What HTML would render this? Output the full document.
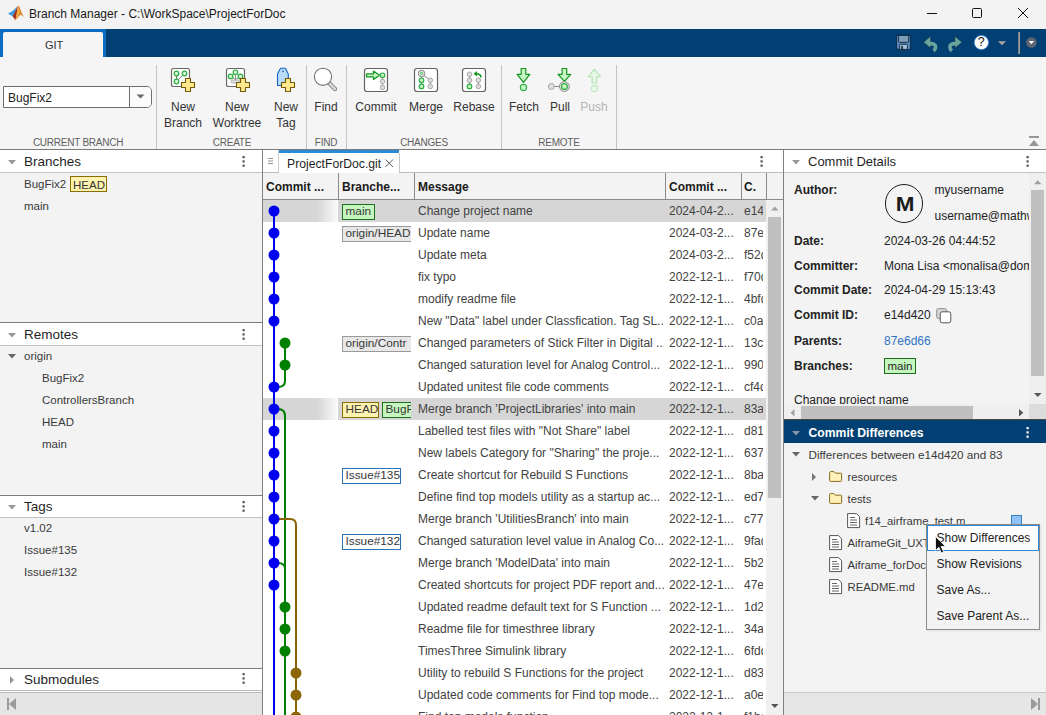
<!DOCTYPE html>
<html><head><meta charset="utf-8">
<style>
*{box-sizing:border-box;margin:0;padding:0}
html,body{width:1046px;height:715px;overflow:hidden;background:#f3f3f3;font-family:"Liberation Sans",sans-serif;font-size:12px;color:#333}
.a{position:absolute}
.t{position:absolute;white-space:nowrap;line-height:14px}
svg{position:absolute;overflow:visible}
</style></head><body>
<!-- TITLE BAR -->
<div class="a" style="left:0;top:0;width:1046px;height:29px;background:#f3f3f3"></div>
<svg style="left:0;top:0" width="30" height="28">
 <path d="M8 13.8L13.5 10.2L17.6 6.3L15.2 12L12.6 16.3Z" fill="#3f9de2"/>
 <path d="M12.6 16.3L17.9 6.1L16.8 13.2L15.4 20.2Z" fill="#a3301c"/>
 <path d="M17.9 6.1L19 5.9L23.6 17L20.6 14.6L15.4 20.2L16.8 13.2Z" fill="#e6842a"/>
 <path d="M18.6 6.6L19.8 12.5L16.2 19.6L17.2 12.6Z" fill="#f5b23c"/>
</svg>
<div class="t" style="left:29px;top:7.3px;font-size:12px;color:#1a1a1a">Branch Manager - C:\WorkSpace\ProjectForDoc</div>
<div class="a" style="left:927px;top:13px;width:10px;height:1px;background:#111"></div>
<div class="a" style="left:972px;top:8px;width:10px;height:10px;border:1px solid #111;border-radius:1.5px"></div>
<svg style="left:1018px;top:8px" width="10" height="10"><path d="M0 0L10 10M10 0L0 10" stroke="#111" stroke-width="1"/></svg>

<!-- TAB BAR -->
<div class="a" style="left:0;top:29px;width:1046px;height:28px;background:#023f72"></div>
<div class="a" style="left:0;top:29px;width:106px;height:28px;background:#0c6cc2"></div>
<div class="a" style="left:3px;top:32px;width:100px;height:25px;background:#f5f5f5;border-radius:2px 2px 0 0"></div>
<div class="t" style="left:45px;top:38px;font-size:11px;color:#333">GIT</div>

<svg style="left:0;top:0" width="1046" height="60">
 <!-- save -->
 <path d="M896.6 35.4H910.4V49.4H898.1L896.6 47.9Z" fill="#5b8dc2" stroke="#0b2438" stroke-width="0.9" stroke-linejoin="round"/>
 <rect x="898.6" y="35.4" width="10" height="7" rx="1" fill="#7e9db8" stroke="#0b2438" stroke-width="0.9"/>
 <rect x="899.6" y="44.4" width="7.8" height="5" rx="0.8" fill="#a5bfd8" stroke="#0b2438" stroke-width="0.9"/>
 <rect x="901.3" y="46" width="1.6" height="3.4" fill="#0b2438"/>
 <!-- undo -->
 <g id="undo">
 <path d="M923.5 42.3L930.6 36.3V48Z" fill="#6aa59d" stroke="#0d2a40" stroke-width="0.5" stroke-linejoin="round"/>
 <path d="M929.5 43.6Q935.6 43.3 935.6 47Q935.6 49.2 933.6 50.9" stroke="#6aa59d" stroke-width="3.6" fill="none"/>
 </g>
 <use href="#undo" transform="translate(1885.5,0) scale(-1,1)"/>
 <!-- help -->
 <circle cx="981.4" cy="42.5" r="7.1" fill="#fff" stroke="#3a8ae0" stroke-width="0.7"/>
 <path d="M998 41.3H1006L1002 45.3Z" fill="#a8a4a0"/>
 <rect x="1018.4" y="32" width="1.5" height="22" fill="#b9ad9f"/>
 <circle cx="1031.4" cy="42.5" r="5.3" fill="#5d6670"/>
 <path d="M1028.6 41H1034.2L1031.4 44.3Z" fill="#fff"/>
</svg>
<div class="t" style="left:977.8px;top:35.3px;font-size:12.5px;font-weight:400;color:#111">?</div>

<!-- TOOLSTRIP -->
<div class="a" style="left:0;top:57px;width:1046px;height:93px;background:#f5f5f5"></div>
<div class="a" style="left:0;top:149px;width:1046px;height:1px;background:#7a7a7a"></div>


<!-- toolstrip separators -->
<div class="a" style="left:156px;top:65px;width:1px;height:84px;background:#c4c4c4"></div>
<div class="a" style="left:306px;top:65px;width:1px;height:84px;background:#c4c4c4"></div>
<div class="a" style="left:346px;top:65px;width:1px;height:84px;background:#c4c4c4"></div>
<div class="a" style="left:501px;top:65px;width:1px;height:84px;background:#c4c4c4"></div>
<div class="a" style="left:616px;top:65px;width:1px;height:84px;background:#c4c4c4"></div>
<!-- combobox -->
<div class="a" style="left:3px;top:86px;width:149px;height:22px;background:#fff;border:1px solid #6e6e6e;border-radius:0 5px 5px 0"></div>
<div class="a" style="left:129px;top:87px;width:1px;height:20px;background:#6e6e6e"></div>
<div class="a" style="left:130px;top:87px;width:21px;height:20px;background:#fbfbfb;border-radius:0 4px 4px 0"></div>
<svg style="left:136px;top:94px" width="10" height="6"><path d="M0.5 0.5H8.5L4.5 4.5Z" fill="#6a6a6a"/></svg>
<div class="t" style="left:8px;top:90.8px;font-size:12px;color:#222">BugFix2</div>
<!-- section labels -->
<div class="t" style="left:31px;top:136px;font-size:10px;letter-spacing:-0.25px;color:#5f5f5f;width:94px;text-align:center">CURRENT BRANCH</div>
<div class="t" style="left:200px;top:136px;font-size:10px;letter-spacing:-0.25px;color:#5f5f5f;width:64px;text-align:center">CREATE</div>
<div class="t" style="left:306px;top:136px;font-size:10px;letter-spacing:-0.25px;color:#5f5f5f;width:40px;text-align:center">FIND</div>
<div class="t" style="left:384px;top:136px;font-size:10px;letter-spacing:-0.25px;color:#5f5f5f;width:80px;text-align:center">CHANGES</div>
<div class="t" style="left:519px;top:136px;font-size:10px;letter-spacing:-0.25px;color:#5f5f5f;width:80px;text-align:center">REMOTE</div>
<!-- button labels -->
<div class="t" style="left:153px;top:99px;width:60px;text-align:center;line-height:16px;font-size:12px;color:#333">New<br>Branch</div>
<div class="t" style="left:207px;top:99px;width:60px;text-align:center;line-height:16px;font-size:12px;color:#333">New<br>Worktree</div>
<div class="t" style="left:256px;top:99px;width:60px;text-align:center;line-height:16px;font-size:12px;color:#333">New<br>Tag</div>
<div class="t" style="left:296px;top:99px;width:60px;text-align:center;line-height:16px;font-size:12px;color:#333">Find</div>
<div class="t" style="left:346px;top:99px;width:60px;text-align:center;line-height:16px;font-size:12px;color:#333">Commit</div>
<div class="t" style="left:396px;top:99px;width:60px;text-align:center;line-height:16px;font-size:12px;color:#333">Merge</div>
<div class="t" style="left:444px;top:99px;width:60px;text-align:center;line-height:16px;font-size:12px;color:#333">Rebase</div>
<div class="t" style="left:494px;top:99px;width:60px;text-align:center;line-height:16px;font-size:12px;color:#333">Fetch</div>
<div class="t" style="left:530px;top:99px;width:60px;text-align:center;line-height:16px;font-size:12px;color:#333">Pull</div>
<div class="t" style="left:564px;top:99px;width:60px;text-align:center;line-height:16px;font-size:12px;color:#b4b4b4">Push</div>
<!-- icons -->
<svg style="left:0;top:0" width="1046" height="150">
 <defs>
  <path id="plus" d="M-2.5 -6.5H2.5V-2.5H6.5V2.5H2.5V6.5H-2.5V2.5H-6.5V-2.5H-2.5Z" fill="#ffe98c" stroke="#735a06" stroke-width="1.1" stroke-linejoin="round"/>
 </defs>
 <!-- new branch -->
 <rect x="171.5" y="68.5" width="18" height="18" rx="2" fill="#fff" stroke="#6a6a6a" stroke-width="1.2"/>
 <path d="M176.5 73.5V81.5L184.5 73.5" stroke="#555" stroke-width="0.8" fill="none"/>
 <g fill="#d6f7d6" stroke="#2fae45" stroke-width="1.2"><circle cx="176.5" cy="73.5" r="2.3"/><circle cx="184.5" cy="73.5" r="2.3"/><circle cx="176.5" cy="81.5" r="2.3"/></g>
 <use href="#plus" x="188" y="85"/>
 <!-- new worktree -->
 <rect x="226.5" y="68.5" width="18" height="18" rx="2" fill="#fff" stroke="#6a6a6a" stroke-width="1.2"/>
 <path d="M235.5 72.5V81M230.6 76.4L235.5 79.5L240.5 76.4" stroke="#777" stroke-width="0.8" fill="none"/>
 <rect x="231" y="80" width="10" height="3" rx="1.5" fill="#ddd" stroke="#999" stroke-width="0.6"/>
 <g fill="#d6f7d6" stroke="#2fae45" stroke-width="1.2"><circle cx="235.5" cy="72.3" r="2.3"/><circle cx="230.6" cy="76.4" r="2.3"/><circle cx="240.5" cy="76.4" r="2.3"/></g>
 <use href="#plus" x="243" y="85"/>
 <!-- new tag -->
 <path d="M277.5 85.5V74L280.5 68.3H285.3L288.3 74V85.5Z" fill="#b9dcfb" stroke="#1a66c4" stroke-width="1.1" stroke-linejoin="round"/>
 <circle cx="283" cy="71.3" r="0.9" fill="#1a66c4"/>
 <use href="#plus" x="288" y="85"/>
 <!-- find -->
 <path d="M328.5 82.5L335 89" stroke="#777" stroke-width="4.2" stroke-linecap="round"/>
 <path d="M328.5 82.5L335 89" stroke="#d9d9d9" stroke-width="2.6" stroke-linecap="round"/>
 <circle cx="323" cy="76.8" r="8.6" fill="#fff" stroke="#6f6f6f" stroke-width="1.1"/>
 <!-- commit -->
 <rect x="364.5" y="68.5" width="23" height="23" rx="2.5" fill="#fff" stroke="#626262" stroke-width="1.2"/>
 <path d="M366.5 73.8H373.5V71L379.5 75.3L373.5 79.6V76.8H366.5Z" fill="#c6f5c6" stroke="#14961e" stroke-width="1.2" stroke-linejoin="round"/>
 <path d="M382.5 75.3V87.4" stroke="#777" stroke-width="0.8"/>
 <circle cx="382.5" cy="75.3" r="2.3" fill="#c6f5c6" stroke="#2fae45" stroke-width="1.2"/>
 <circle cx="382.5" cy="81.4" r="2.3" fill="#ddd" stroke="#a8a8a8" stroke-width="1"/>
 <circle cx="382.5" cy="87.4" r="2.3" fill="#ddd" stroke="#a8a8a8" stroke-width="1"/>
 <!-- merge -->
 <rect x="414.5" y="68.5" width="23" height="23" rx="2.5" fill="#fff" stroke="#626262" stroke-width="1.2"/>
 <path d="M421.5 73.5V86.4M421.5 73.5L430.3 80.3V86.4" stroke="#666" stroke-width="0.8" fill="none"/>
 <circle cx="421.5" cy="73.5" r="3.3" fill="#e8e8e8" stroke="#8a8a8a" stroke-width="1"/>
 <circle cx="421.5" cy="73.5" r="1.2" fill="#c6f5c6" stroke="#2fae45" stroke-width="0.8"/>
 <circle cx="421.5" cy="80.3" r="2.3" fill="#c6f5c6" stroke="#2fae45" stroke-width="1.2"/>
 <circle cx="421.5" cy="86.4" r="2.3" fill="#c6f5c6" stroke="#2fae45" stroke-width="1.2"/>
 <circle cx="430.3" cy="80.3" r="2.3" fill="#ddd" stroke="#a8a8a8" stroke-width="1"/>
 <circle cx="430.3" cy="86.4" r="2.3" fill="#ddd" stroke="#a8a8a8" stroke-width="1"/>
 <!-- rebase -->
 <rect x="462.5" y="68.5" width="23" height="23" rx="2.5" fill="#fff" stroke="#626262" stroke-width="1.2"/>
 <path d="M469.5 74.3V86.4M478.4 80.3V86.4" stroke="#666" stroke-width="0.8" fill="none"/>
 <circle cx="469.5" cy="74.3" r="2.3" fill="#ddd" stroke="#a8a8a8" stroke-width="1"/>
 <circle cx="469.5" cy="80.3" r="2.3" fill="#ddd" stroke="#a8a8a8" stroke-width="1"/>
 <circle cx="469.5" cy="86.4" r="2.3" fill="#c6f5c6" stroke="#2fae45" stroke-width="1.2"/>
 <circle cx="478.4" cy="80.3" r="2.3" fill="#ddd" stroke="#a8a8a8" stroke-width="1"/>
 <circle cx="478.4" cy="86.4" r="2.3" fill="#ddd" stroke="#a8a8a8" stroke-width="1"/>
 <path d="M481 77.5C481 74.5 479 73.8 476 73.8" stroke="#14961e" stroke-width="1.6" fill="none"/>
 <path d="M473.5 73.8L477 71V76.6Z" fill="#14961e"/>
 <!-- fetch -->
 <path d="M521.2 68.5H525.8V74.3H529.8L523.5 82.4L517.2 74.3H521.2Z" fill="#c6f5c6" stroke="#14961e" stroke-width="1.2" stroke-linejoin="round"/>
 <circle cx="523.5" cy="87.5" r="3.1" fill="#c6f5c6" stroke="#2fae45" stroke-width="1.2"/>
 <!-- pull -->
 <path d="M562.1 68.5H566.7V74.3H570.7L564.4 81.4L558.1 74.3H562.1Z" fill="#c6f5c6" stroke="#14961e" stroke-width="1.2" stroke-linejoin="round"/>
 <path d="M551.3 86.5H564" stroke="#888" stroke-width="1"/>
 <circle cx="551.3" cy="86.5" r="3" fill="#ddd" stroke="#a0a0a0" stroke-width="0.9"/>
 <circle cx="564.4" cy="86.5" r="4.9" fill="#e6e6e6" stroke="#8a8a8a" stroke-width="1"/>
 <circle cx="564.4" cy="86.5" r="2.9" fill="#c6f5c6" stroke="#2fae45" stroke-width="1.2"/>
 <!-- push (disabled) -->
 <path d="M592.1 83V76.7H588.3L594.4 69.2L600.5 76.7H596.7V83Z" fill="#e6f8e6" stroke="#b5e2b5" stroke-width="1.1" stroke-linejoin="round"/>
 <circle cx="594.4" cy="88.5" r="3.1" fill="#e6f8e6" stroke="#bfe6bf" stroke-width="1.1"/>
 <!-- collapse toolstrip -->
 <rect x="1029" y="136" width="10" height="2" fill="#979797"/>
 <path d="M1029 146L1034 140L1039 146Z" fill="#979797"/>
</svg>

<!-- LEFT PANEL -->
<div class="a" style="left:0;top:150px;width:262px;height:542px;background:#f3f3f3"></div>
<div class="a" style="left:0;top:150px;width:262px;height:22px;background:#fff"></div>
<div class="a" style="left:0;top:172px;width:262px;height:1px;background:#c2c2c2"></div>
<svg style="left:8px;top:159.7px" width="8" height="5"><path d="M0 0H8L4 4.5Z" fill="#999"/></svg>
<div class="t" style="left:24px;top:154.82px;font-size:13.5px;color:#1f1f1f;font-weight:400;">Branches</div>
<svg style="left:242px;top:155.7px" width="4" height="12"><rect x="0.5" y="0" width="2.2" height="2.2" fill="#555"/><rect x="0.5" y="4.3" width="2.2" height="2.2" fill="#555"/><rect x="0.5" y="8.6" width="2.2" height="2.2" fill="#555"/></svg>
<div class="t" style="left:24px;top:177.42px;font-size:11.5px;color:#3a3a3a;font-weight:400;">BugFix2</div>
<div class="a" style="left:70px;top:176px;width:37px;height:16px;background:#fff3b0;border:1px solid #8a6d00"></div>
<div class="t" style="left:73px;top:177.52px;font-size:11.5px;color:#333;font-weight:400;">HEAD</div>
<div class="t" style="left:24px;top:199.42px;font-size:11.5px;color:#3a3a3a;font-weight:400;">main</div>
<div class="a" style="left:0;top:322px;width:262px;height:1px;background:#7d7d7d"></div>
<div class="a" style="left:0;top:323px;width:262px;height:22px;background:#fff"></div>
<div class="a" style="left:0;top:345px;width:262px;height:1px;background:#c2c2c2"></div>
<svg style="left:8px;top:332.7px" width="8" height="5"><path d="M0 0H8L4 4.5Z" fill="#999"/></svg>
<div class="t" style="left:24px;top:328.02px;font-size:13.5px;color:#1f1f1f;font-weight:400;">Remotes</div>
<svg style="left:242px;top:328.7px" width="4" height="12"><rect x="0.5" y="0" width="2.2" height="2.2" fill="#555"/><rect x="0.5" y="4.3" width="2.2" height="2.2" fill="#555"/><rect x="0.5" y="8.6" width="2.2" height="2.2" fill="#555"/></svg>
<svg style="left:8px;top:354px" width="8" height="5"><path d="M0 0H8L4 4.5Z" fill="#666"/></svg>
<div class="t" style="left:24px;top:349.42px;font-size:11.5px;color:#3a3a3a;font-weight:400;">origin</div>
<div class="t" style="left:42px;top:371.42px;font-size:11.5px;color:#3a3a3a;font-weight:400;">BugFix2</div>
<div class="t" style="left:42px;top:393.42px;font-size:11.5px;color:#3a3a3a;font-weight:400;">ControllersBranch</div>
<div class="t" style="left:42px;top:415.42px;font-size:11.5px;color:#3a3a3a;font-weight:400;">HEAD</div>
<div class="t" style="left:42px;top:437.42px;font-size:11.5px;color:#3a3a3a;font-weight:400;">main</div>
<div class="a" style="left:0;top:495px;width:262px;height:1px;background:#7d7d7d"></div>
<div class="a" style="left:0;top:496px;width:262px;height:21px;background:#fff"></div>
<div class="a" style="left:0;top:517px;width:262px;height:1px;background:#c2c2c2"></div>
<svg style="left:8px;top:505.2px" width="8" height="5"><path d="M0 0H8L4 4.5Z" fill="#999"/></svg>
<div class="t" style="left:24px;top:499.72px;font-size:13.5px;color:#1f1f1f;font-weight:400;">Tags</div>
<svg style="left:242px;top:501.2px" width="4" height="12"><rect x="0.5" y="0" width="2.2" height="2.2" fill="#555"/><rect x="0.5" y="4.3" width="2.2" height="2.2" fill="#555"/><rect x="0.5" y="8.6" width="2.2" height="2.2" fill="#555"/></svg>
<div class="t" style="left:24px;top:521.42px;font-size:11.5px;color:#3a3a3a;font-weight:400;">v1.02</div>
<div class="t" style="left:24px;top:543.42px;font-size:11.5px;color:#3a3a3a;font-weight:400;">Issue#135</div>
<div class="t" style="left:24px;top:565.42px;font-size:11.5px;color:#3a3a3a;font-weight:400;">Issue#132</div>
<div class="a" style="left:0;top:668px;width:262px;height:1px;background:#7d7d7d"></div>
<div class="a" style="left:0;top:669px;width:262px;height:21px;background:#fff"></div>
<div class="a" style="left:0;top:690px;width:262px;height:1px;background:#c2c2c2"></div>
<svg style="left:10px;top:675.7px" width="5" height="9"><path d="M0 0V8L4 4Z" fill="#999"/></svg>
<div class="t" style="left:24px;top:673.02px;font-size:13.5px;color:#1f1f1f;font-weight:400;">Submodules</div>
<svg style="left:242px;top:673.4px" width="4" height="12"><rect x="0.5" y="0" width="2.2" height="2.2" fill="#555"/><rect x="0.5" y="4.3" width="2.2" height="2.2" fill="#555"/><rect x="0.5" y="8.6" width="2.2" height="2.2" fill="#555"/></svg>
<div class="a" style="left:0;top:690px;width:262px;height:1px;background:#bdbdbd"></div>
<div class="a" style="left:0;top:691px;width:262px;height:1px;background:#fff"></div>
<div class="a" style="left:0;top:692px;width:262px;height:1px;background:#bdbdbd"></div>
<div class="a" style="left:0;top:693px;width:262px;height:22px;background:#e5e5e5"></div>
<svg style="left:7px;top:698px" width="10" height="12"><rect x="0" y="0" width="2" height="12" fill="#9a9a9a"/><path d="M2 6L9 0V12Z" fill="#9a9a9a"/></svg>
<div class="a" style="left:262px;top:150px;width:1px;height:565px;background:#808080"></div>

<!-- MIDDLE PANEL -->
<div class="a" style="left:263px;top:150px;width:520px;height:23px;background:#fff"></div>
<div class="a" style="left:263px;top:172px;width:16px;height:1px;background:#bdbdbd"></div>
<div class="a" style="left:399px;top:172px;width:384px;height:1px;background:#bdbdbd"></div>
<div class="a" style="left:278px;top:150px;width:1px;height:22px;background:#d0d0d0"></div>
<div class="a" style="left:399px;top:153px;width:1px;height:19px;background:#c8c8c8"></div>
<div class="a" style="left:279px;top:150px;width:120px;height:3px;background:#2b8ad6"></div>
<svg style="left:268px;top:158px" width="6" height="7"><path d="M0 0.5H5M0 3H5M0 5.5H5" stroke="#888" stroke-width="0.9"/></svg>
<div class="t" style="left:287px;top:156.77px;font-size:12.2px;color:#1f1f1f;font-weight:400;">ProjectForDoc.git</div>
<svg style="left:385px;top:159px" width="9" height="9"><path d="M0.5 0.5L8 8M8 0.5L0.5 8" stroke="#444" stroke-width="0.9"/></svg>
<svg style="left:760px;top:156px" width="4" height="12"><rect x="0.5" y="0" width="2.2" height="2.2" fill="#555"/><rect x="0.5" y="4.3" width="2.2" height="2.2" fill="#555"/><rect x="0.5" y="8.6" width="2.2" height="2.2" fill="#555"/></svg>
<div class="a" style="left:263px;top:173px;width:520px;height:26px;background:#f3f3f3"></div>
<div class="a" style="left:263px;top:199px;width:520px;height:1px;background:#8a8a8a"></div>
<div class="a" style="left:338px;top:173px;width:1px;height:26px;background:#8a8a8a"></div>
<div class="a" style="left:414px;top:173px;width:1px;height:26px;background:#8a8a8a"></div>
<div class="a" style="left:665px;top:173px;width:1px;height:26px;background:#8a8a8a"></div>
<div class="a" style="left:741px;top:173px;width:1px;height:26px;background:#8a8a8a"></div>
<div class="a" style="left:766px;top:173px;width:1px;height:26px;background:#8a8a8a"></div>
<div class="t" style="left:266px;top:179.84px;font-size:12px;color:#1a1a1a;font-weight:700;">Commit ...</div>
<div class="t" style="left:342px;top:179.84px;font-size:12px;color:#1a1a1a;font-weight:700;">Branche...</div>
<div class="t" style="left:418px;top:179.84px;font-size:12px;color:#1a1a1a;font-weight:700;">Message</div>
<div class="t" style="left:669px;top:179.84px;font-size:12px;color:#1a1a1a;font-weight:700;">Commit ...</div>
<div class="t" style="left:744px;top:179.84px;font-size:12px;color:#1a1a1a;font-weight:700;">C.</div>
<div class="a" style="left:263px;top:200px;width:503px;height:515px;background:#fff"></div>
<div class="a" style="left:263px;top:200px;width:503px;height:515px;overflow:hidden">
<div class="a" style="left:0;top:0px;width:503px;height:22px;background:#d6d6d6"></div>
<div class="a" style="left:54px;top:0px;width:21px;height:22px;background:linear-gradient(90deg,#d6d6d6,#fbfbfb)"></div>
<div class="a" style="left:74px;top:0px;width:1px;height:22px;background:#fff"></div>
<div class="a" style="left:155px;top:0px;width:246px;height:22px;overflow:hidden"><div class="t" style="left:0px;top:4.44px;font-size:12px;color:#424242;font-weight:400;">Change project name</div>
</div>
<div class="t" style="left:406px;top:4.44px;font-size:12px;color:#424242;font-weight:400;">2024-04-2...</div>
<div class="a" style="left:478px;top:0px;width:22px;height:22px;overflow:hidden"><div class="t" style="left:3px;top:4.44px;font-size:12px;color:#424242;font-weight:400;">e14d6e</div>
</div>
<div class="a" style="left:75px;top:0px;width:73px;height:22px;overflow:hidden">
<div class="a" style="left:4px;top:3.5px;width:33px;height:16px;background:#c6f6c0;border:1px solid #1f6e1f"></div>
<div class="t" style="left:7.5px;top:4.41px;font-size:11.8px;color:#383838;font-weight:400;">main</div>
</div>
<div class="a" style="left:155px;top:22px;width:246px;height:22px;overflow:hidden"><div class="t" style="left:0px;top:4.44px;font-size:12px;color:#424242;font-weight:400;">Update name</div>
</div>
<div class="t" style="left:406px;top:26.44px;font-size:12px;color:#424242;font-weight:400;">2024-03-2...</div>
<div class="a" style="left:478px;top:22px;width:22px;height:22px;overflow:hidden"><div class="t" style="left:3px;top:4.44px;font-size:12px;color:#424242;font-weight:400;">87ed6e</div>
</div>
<div class="a" style="left:75px;top:22px;width:73px;height:22px;overflow:hidden">
<div class="a" style="left:4px;top:3.5px;width:80px;height:16px;background:#e8e8e8;border:1px solid #9a9a9a"></div>
<div class="t" style="left:7.5px;top:4.41px;font-size:11.8px;color:#383838;font-weight:400;">origin/HEAD</div>
</div>
<div class="a" style="left:155px;top:44px;width:246px;height:22px;overflow:hidden"><div class="t" style="left:0px;top:4.44px;font-size:12px;color:#424242;font-weight:400;">Update meta</div>
</div>
<div class="t" style="left:406px;top:48.44px;font-size:12px;color:#424242;font-weight:400;">2024-03-2...</div>
<div class="a" style="left:478px;top:44px;width:22px;height:22px;overflow:hidden"><div class="t" style="left:3px;top:4.44px;font-size:12px;color:#424242;font-weight:400;">f52d6e</div>
</div>
<div class="a" style="left:155px;top:66px;width:246px;height:22px;overflow:hidden"><div class="t" style="left:0px;top:4.44px;font-size:12px;color:#424242;font-weight:400;">fix typo</div>
</div>
<div class="t" style="left:406px;top:70.44px;font-size:12px;color:#424242;font-weight:400;">2022-12-1...</div>
<div class="a" style="left:478px;top:66px;width:22px;height:22px;overflow:hidden"><div class="t" style="left:3px;top:4.44px;font-size:12px;color:#424242;font-weight:400;">f70d6e</div>
</div>
<div class="a" style="left:155px;top:88px;width:246px;height:22px;overflow:hidden"><div class="t" style="left:0px;top:4.44px;font-size:12px;color:#424242;font-weight:400;">modify readme file</div>
</div>
<div class="t" style="left:406px;top:92.44px;font-size:12px;color:#424242;font-weight:400;">2022-12-1...</div>
<div class="a" style="left:478px;top:88px;width:22px;height:22px;overflow:hidden"><div class="t" style="left:3px;top:4.44px;font-size:12px;color:#424242;font-weight:400;">4bfd6e</div>
</div>
<div class="a" style="left:155px;top:110px;width:246px;height:22px;overflow:hidden"><div class="t" style="left:0px;top:4.44px;font-size:12px;color:#424242;font-weight:400;">New "Data" label under Classfication. Tag SL...</div>
</div>
<div class="t" style="left:406px;top:114.44px;font-size:12px;color:#424242;font-weight:400;">2022-12-1...</div>
<div class="a" style="left:478px;top:110px;width:22px;height:22px;overflow:hidden"><div class="t" style="left:3px;top:4.44px;font-size:12px;color:#424242;font-weight:400;">c0ad6e</div>
</div>
<div class="a" style="left:155px;top:132px;width:246px;height:22px;overflow:hidden"><div class="t" style="left:0px;top:4.44px;font-size:12px;color:#424242;font-weight:400;">Changed parameters of Stick Filter in Digital ...</div>
</div>
<div class="t" style="left:406px;top:136.44px;font-size:12px;color:#424242;font-weight:400;">2022-12-1...</div>
<div class="a" style="left:478px;top:132px;width:22px;height:22px;overflow:hidden"><div class="t" style="left:3px;top:4.44px;font-size:12px;color:#424242;font-weight:400;">13cd6e</div>
</div>
<div class="a" style="left:75px;top:132px;width:73px;height:22px;overflow:hidden">
<div class="a" style="left:4px;top:3.5px;width:80px;height:16px;background:#e8e8e8;border:1px solid #9a9a9a"></div>
<div class="t" style="left:7.5px;top:4.41px;font-size:11.8px;color:#383838;font-weight:400;">origin/Contr</div>
</div>
<div class="a" style="left:155px;top:154px;width:246px;height:22px;overflow:hidden"><div class="t" style="left:0px;top:4.44px;font-size:12px;color:#424242;font-weight:400;">Changed saturation level for Analog Control...</div>
</div>
<div class="t" style="left:406px;top:158.44px;font-size:12px;color:#424242;font-weight:400;">2022-12-1...</div>
<div class="a" style="left:478px;top:154px;width:22px;height:22px;overflow:hidden"><div class="t" style="left:3px;top:4.44px;font-size:12px;color:#424242;font-weight:400;">990d6e</div>
</div>
<div class="a" style="left:155px;top:176px;width:246px;height:22px;overflow:hidden"><div class="t" style="left:0px;top:4.44px;font-size:12px;color:#424242;font-weight:400;">Updated unitest file code comments</div>
</div>
<div class="t" style="left:406px;top:180.44px;font-size:12px;color:#424242;font-weight:400;">2022-12-1...</div>
<div class="a" style="left:478px;top:176px;width:22px;height:22px;overflow:hidden"><div class="t" style="left:3px;top:4.44px;font-size:12px;color:#424242;font-weight:400;">cf4d6e</div>
</div>
<div class="a" style="left:0;top:198px;width:503px;height:22px;background:#d6d6d6"></div>
<div class="a" style="left:54px;top:198px;width:21px;height:22px;background:linear-gradient(90deg,#d6d6d6,#fbfbfb)"></div>
<div class="a" style="left:74px;top:198px;width:1px;height:22px;background:#fff"></div>
<div class="a" style="left:155px;top:198px;width:246px;height:22px;overflow:hidden"><div class="t" style="left:0px;top:4.44px;font-size:12px;color:#424242;font-weight:400;">Merge branch 'ProjectLibraries' into main</div>
</div>
<div class="t" style="left:406px;top:202.44px;font-size:12px;color:#424242;font-weight:400;">2022-12-1...</div>
<div class="a" style="left:478px;top:198px;width:22px;height:22px;overflow:hidden"><div class="t" style="left:3px;top:4.44px;font-size:12px;color:#424242;font-weight:400;">83ad6e</div>
</div>
<div class="a" style="left:75px;top:198px;width:73px;height:22px;overflow:hidden">
<div class="a" style="left:4px;top:3.5px;width:37px;height:16px;background:#fff3b0;border:1px solid #8a6d00"></div>
<div class="t" style="left:7.5px;top:4.41px;font-size:11.8px;color:#383838;font-weight:400;">HEAD</div>
<div class="a" style="left:44px;top:3.5px;width:40px;height:16px;background:#c6f6c0;border:1px solid #1f6e1f"></div>
<div class="t" style="left:47.5px;top:4.41px;font-size:11.8px;color:#383838;font-weight:400;">BugF</div>
</div>
<div class="a" style="left:155px;top:220px;width:246px;height:22px;overflow:hidden"><div class="t" style="left:0px;top:4.44px;font-size:12px;color:#424242;font-weight:400;">Labelled test files with "Not Share" label</div>
</div>
<div class="t" style="left:406px;top:224.44px;font-size:12px;color:#424242;font-weight:400;">2022-12-1...</div>
<div class="a" style="left:478px;top:220px;width:22px;height:22px;overflow:hidden"><div class="t" style="left:3px;top:4.44px;font-size:12px;color:#424242;font-weight:400;">d81d6e</div>
</div>
<div class="a" style="left:155px;top:242px;width:246px;height:22px;overflow:hidden"><div class="t" style="left:0px;top:4.44px;font-size:12px;color:#424242;font-weight:400;">New labels Category for "Sharing" the proje...</div>
</div>
<div class="t" style="left:406px;top:246.44px;font-size:12px;color:#424242;font-weight:400;">2022-12-1...</div>
<div class="a" style="left:478px;top:242px;width:22px;height:22px;overflow:hidden"><div class="t" style="left:3px;top:4.44px;font-size:12px;color:#424242;font-weight:400;">637d6e</div>
</div>
<div class="a" style="left:155px;top:264px;width:246px;height:22px;overflow:hidden"><div class="t" style="left:0px;top:4.44px;font-size:12px;color:#424242;font-weight:400;">Create shortcut for Rebuild S Functions</div>
</div>
<div class="t" style="left:406px;top:268.44px;font-size:12px;color:#424242;font-weight:400;">2022-12-1...</div>
<div class="a" style="left:478px;top:264px;width:22px;height:22px;overflow:hidden"><div class="t" style="left:3px;top:4.44px;font-size:12px;color:#424242;font-weight:400;">8bad6e</div>
</div>
<div class="a" style="left:75px;top:264px;width:73px;height:22px;overflow:hidden">
<div class="a" style="left:4px;top:3.5px;width:59px;height:16px;background:#ffffff;border:1px solid #2d74b5"></div>
<div class="t" style="left:7.5px;top:4.41px;font-size:11.8px;color:#383838;font-weight:400;">Issue#135</div>
</div>
<div class="a" style="left:155px;top:286px;width:246px;height:22px;overflow:hidden"><div class="t" style="left:0px;top:4.44px;font-size:12px;color:#424242;font-weight:400;">Define find top models utility as a startup ac...</div>
</div>
<div class="t" style="left:406px;top:290.44px;font-size:12px;color:#424242;font-weight:400;">2022-12-1...</div>
<div class="a" style="left:478px;top:286px;width:22px;height:22px;overflow:hidden"><div class="t" style="left:3px;top:4.44px;font-size:12px;color:#424242;font-weight:400;">ed7d6e</div>
</div>
<div class="a" style="left:155px;top:308px;width:246px;height:22px;overflow:hidden"><div class="t" style="left:0px;top:4.44px;font-size:12px;color:#424242;font-weight:400;">Merge branch 'UtilitiesBranch' into main</div>
</div>
<div class="t" style="left:406px;top:312.44px;font-size:12px;color:#424242;font-weight:400;">2022-12-1...</div>
<div class="a" style="left:478px;top:308px;width:22px;height:22px;overflow:hidden"><div class="t" style="left:3px;top:4.44px;font-size:12px;color:#424242;font-weight:400;">c77d6e</div>
</div>
<div class="a" style="left:155px;top:330px;width:246px;height:22px;overflow:hidden"><div class="t" style="left:0px;top:4.44px;font-size:12px;color:#424242;font-weight:400;">Changed saturation level value in Analog Co...</div>
</div>
<div class="t" style="left:406px;top:334.44px;font-size:12px;color:#424242;font-weight:400;">2022-12-1...</div>
<div class="a" style="left:478px;top:330px;width:22px;height:22px;overflow:hidden"><div class="t" style="left:3px;top:4.44px;font-size:12px;color:#424242;font-weight:400;">9fad6e</div>
</div>
<div class="a" style="left:75px;top:330px;width:73px;height:22px;overflow:hidden">
<div class="a" style="left:4px;top:3.5px;width:59px;height:16px;background:#ffffff;border:1px solid #2d74b5"></div>
<div class="t" style="left:7.5px;top:4.41px;font-size:11.8px;color:#383838;font-weight:400;">Issue#132</div>
</div>
<div class="a" style="left:155px;top:352px;width:246px;height:22px;overflow:hidden"><div class="t" style="left:0px;top:4.44px;font-size:12px;color:#424242;font-weight:400;">Merge branch 'ModelData' into main</div>
</div>
<div class="t" style="left:406px;top:356.44px;font-size:12px;color:#424242;font-weight:400;">2022-12-1...</div>
<div class="a" style="left:478px;top:352px;width:22px;height:22px;overflow:hidden"><div class="t" style="left:3px;top:4.44px;font-size:12px;color:#424242;font-weight:400;">5b2d6e</div>
</div>
<div class="a" style="left:155px;top:374px;width:246px;height:22px;overflow:hidden"><div class="t" style="left:0px;top:4.44px;font-size:12px;color:#424242;font-weight:400;">Created shortcuts for project PDF report and...</div>
</div>
<div class="t" style="left:406px;top:378.44px;font-size:12px;color:#424242;font-weight:400;">2022-12-1...</div>
<div class="a" style="left:478px;top:374px;width:22px;height:22px;overflow:hidden"><div class="t" style="left:3px;top:4.44px;font-size:12px;color:#424242;font-weight:400;">47ed6e</div>
</div>
<div class="a" style="left:155px;top:396px;width:246px;height:22px;overflow:hidden"><div class="t" style="left:0px;top:4.44px;font-size:12px;color:#424242;font-weight:400;">Updated readme default text for S Function ...</div>
</div>
<div class="t" style="left:406px;top:400.44px;font-size:12px;color:#424242;font-weight:400;">2022-12-1...</div>
<div class="a" style="left:478px;top:396px;width:22px;height:22px;overflow:hidden"><div class="t" style="left:3px;top:4.44px;font-size:12px;color:#424242;font-weight:400;">1d2d6e</div>
</div>
<div class="a" style="left:155px;top:418px;width:246px;height:22px;overflow:hidden"><div class="t" style="left:0px;top:4.44px;font-size:12px;color:#424242;font-weight:400;">Readme file for timesthree library</div>
</div>
<div class="t" style="left:406px;top:422.44px;font-size:12px;color:#424242;font-weight:400;">2022-12-1...</div>
<div class="a" style="left:478px;top:418px;width:22px;height:22px;overflow:hidden"><div class="t" style="left:3px;top:4.44px;font-size:12px;color:#424242;font-weight:400;">34ad6e</div>
</div>
<div class="a" style="left:155px;top:440px;width:246px;height:22px;overflow:hidden"><div class="t" style="left:0px;top:4.44px;font-size:12px;color:#424242;font-weight:400;">TimesThree Simulink library</div>
</div>
<div class="t" style="left:406px;top:444.44px;font-size:12px;color:#424242;font-weight:400;">2022-12-1...</div>
<div class="a" style="left:478px;top:440px;width:22px;height:22px;overflow:hidden"><div class="t" style="left:3px;top:4.44px;font-size:12px;color:#424242;font-weight:400;">6fdd6e</div>
</div>
<div class="a" style="left:155px;top:462px;width:246px;height:22px;overflow:hidden"><div class="t" style="left:0px;top:4.44px;font-size:12px;color:#424242;font-weight:400;">Utility to rebuild S Functions for the project</div>
</div>
<div class="t" style="left:406px;top:466.44px;font-size:12px;color:#424242;font-weight:400;">2022-12-1...</div>
<div class="a" style="left:478px;top:462px;width:22px;height:22px;overflow:hidden"><div class="t" style="left:3px;top:4.44px;font-size:12px;color:#424242;font-weight:400;">d83d6e</div>
</div>
<div class="a" style="left:155px;top:484px;width:246px;height:22px;overflow:hidden"><div class="t" style="left:0px;top:4.44px;font-size:12px;color:#424242;font-weight:400;">Updated code comments for Find top mode...</div>
</div>
<div class="t" style="left:406px;top:488.44px;font-size:12px;color:#424242;font-weight:400;">2022-12-1...</div>
<div class="a" style="left:478px;top:484px;width:22px;height:22px;overflow:hidden"><div class="t" style="left:3px;top:4.44px;font-size:12px;color:#424242;font-weight:400;">a0ed6e</div>
</div>
<div class="a" style="left:155px;top:506px;width:246px;height:22px;overflow:hidden"><div class="t" style="left:0px;top:4.44px;font-size:12px;color:#424242;font-weight:400;">Find top models function</div>
</div>
<div class="t" style="left:406px;top:510.44px;font-size:12px;color:#424242;font-weight:400;">2022-12-1...</div>
<div class="a" style="left:478px;top:506px;width:22px;height:22px;overflow:hidden"><div class="t" style="left:3px;top:4.44px;font-size:12px;color:#424242;font-weight:400;">f1bd6e</div>
</div>
</div>
<svg style="left:263px;top:200px" width="503" height="515"><g transform="translate(-263,-200)"><path d="M274 211V715" stroke="#0000f0" stroke-width="2" fill="none"/><path d="M285 343V381 Q285 387 278 387" stroke="#007f00" stroke-width="2" fill="none"/><path d="M278 409 Q285 409 285 416 V715" stroke="#007f00" stroke-width="2" fill="none"/><path d="M278 519 H290 Q296 519 296 525 V715" stroke="#8c6508" stroke-width="2" fill="none"/><path d="M278 563 Q285 563 285 569" stroke="#007f00" stroke-width="2" fill="none"/><circle cx="274" cy="211" r="5.5" fill="#0000f0"/><circle cx="274" cy="233" r="5.5" fill="#0000f0"/><circle cx="274" cy="255" r="5.5" fill="#0000f0"/><circle cx="274" cy="277" r="5.5" fill="#0000f0"/><circle cx="274" cy="299" r="5.5" fill="#0000f0"/><circle cx="274" cy="321" r="5.5" fill="#0000f0"/><circle cx="274" cy="387" r="5.5" fill="#0000f0"/><circle cx="274" cy="409" r="5.5" fill="#0000f0"/><circle cx="274" cy="431" r="5.5" fill="#0000f0"/><circle cx="274" cy="453" r="5.5" fill="#0000f0"/><circle cx="274" cy="475" r="5.5" fill="#0000f0"/><circle cx="274" cy="497" r="5.5" fill="#0000f0"/><circle cx="274" cy="519" r="5.5" fill="#0000f0"/><circle cx="274" cy="541" r="5.5" fill="#0000f0"/><circle cx="274" cy="563" r="5.5" fill="#0000f0"/><circle cx="274" cy="585" r="5.5" fill="#0000f0"/><circle cx="285" cy="343" r="5.5" fill="#007f00"/><circle cx="285" cy="365" r="5.5" fill="#007f00"/><circle cx="285" cy="607" r="5.5" fill="#007f00"/><circle cx="285" cy="629" r="5.5" fill="#007f00"/><circle cx="285" cy="651" r="5.5" fill="#007f00"/><circle cx="296" cy="673" r="5.5" fill="#8c6508"/><circle cx="296" cy="695" r="5.5" fill="#8c6508"/><circle cx="296" cy="717" r="5.5" fill="#8c6508"/></g></svg>
<div class="a" style="left:766px;top:200px;width:17px;height:515px;background:#f0f0f0"></div>
<svg style="left:771px;top:206px" width="8" height="5"><path d="M0 4.5H7.5L3.75 0.5Z" fill="#a0a0a0"/></svg>
<div class="a" style="left:768px;top:217px;width:13px;height:281px;background:#c0c0c0"></div>
<svg style="left:771px;top:704px" width="8" height="5"><path d="M0 0H7.5L3.75 4Z" fill="#555"/></svg>
<div class="a" style="left:783px;top:150px;width:1px;height:565px;background:#808080"></div>

<!-- RIGHT PANEL -->
<div class="a" style="left:784px;top:150px;width:262px;height:565px;background:#f3f3f3"></div>
<div class="a" style="left:784px;top:150px;width:262px;height:22px;background:#fff"></div>
<div class="a" style="left:784px;top:172px;width:262px;height:1px;background:#c2c2c2"></div>
<svg style="left:792px;top:160px" width="8" height="5"><path d="M0 0H8L4 4.5Z" fill="#999"/></svg>
<div class="t" style="left:808px;top:155.00px;font-size:13px;color:#1f1f1f;font-weight:400;">Commit Details</div>
<svg style="left:1026px;top:156px" width="4" height="12"><rect x="0.5" y="0" width="2.2" height="2.2" fill="#555"/><rect x="0.5" y="4.3" width="2.2" height="2.2" fill="#555"/><rect x="0.5" y="8.6" width="2.2" height="2.2" fill="#555"/></svg>
<div class="t" style="left:794px;top:182.84px;font-size:12px;color:#222;font-weight:700;">Author:</div>
<div class="t" style="left:794px;top:233.84px;font-size:12px;color:#222;font-weight:700;">Date:</div>
<div class="t" style="left:794px;top:258.84px;font-size:12px;color:#222;font-weight:700;">Committer:</div>
<div class="t" style="left:794px;top:283.14px;font-size:12px;color:#222;font-weight:700;">Commit Date:</div>
<div class="t" style="left:794px;top:307.84px;font-size:12px;color:#222;font-weight:700;">Commit ID:</div>
<div class="t" style="left:794px;top:333.84px;font-size:12px;color:#222;font-weight:700;">Parents:</div>
<div class="t" style="left:794px;top:358.64px;font-size:12px;color:#222;font-weight:700;">Branches:</div>
<div class="a" style="left:784px;top:173px;width:245px;height:231px;overflow:hidden">
<div class="a" style="left:100.5px;top:11px;width:38.5px;height:38.5px;border:1.5px solid #1e1e1e;border-radius:50%"></div>
<div class="t" style="left:100.5px;top:24px;width:40px;text-align:center;font-size:20px;font-weight:700;color:#1a1a1a;transform:scaleX(1.12)">M</div>
<div class="t" style="left:150.5px;top:9.84px;font-size:12px;color:#222;font-weight:400;">myusername</div>
<div class="t" style="left:150.5px;top:36.24px;font-size:12px;color:#222;font-weight:400;">username@mathworks.com</div>
<div class="t" style="left:100px;top:60.84px;font-size:12px;color:#222;font-weight:400;">2024-03-26 04:44:52</div>
<div class="t" style="left:100px;top:85.84px;font-size:12px;color:#222;font-weight:400;">Mona Lisa &lt;monalisa@domain.com&gt;</div>
<div class="t" style="left:100px;top:110.14px;font-size:12px;color:#222;font-weight:400;">2024-04-29 15:13:43</div>
<div class="t" style="left:100px;top:134.84px;font-size:12px;color:#222;font-weight:400;">e14d420</div>
<div class="t" style="left:100px;top:160.84px;font-size:12px;color:#3073c2;font-weight:400;">87e6d66</div>
<div class="a" style="left:100px;top:185px;width:32px;height:16px;background:#c6f6c0;border:1px solid #1d6b1d"></div>
<div class="t" style="left:103.5px;top:185.82px;font-size:11.5px;color:#222;font-weight:400;">main</div>
<div class="t" style="left:10px;top:220.44px;font-size:12px;color:#222;font-weight:400;">Change project name</div>
<svg style="left:152px;top:135px" width="16" height="16"><rect x="0.6" y="0.6" width="10" height="10" rx="2" fill="#d6d6d6" stroke="#888" stroke-width="0.9"/><rect x="4.2" y="3.8" width="10.6" height="11" rx="2" fill="#fff" stroke="#555" stroke-width="1"/></svg>
</div>
<div class="a" style="left:1029px;top:173px;width:17px;height:231px;background:#efefef"></div>
<svg style="left:1034px;top:180px" width="8" height="5"><path d="M0 4.3H7.5L3.75 0.3Z" fill="#a0a0a0"/></svg>
<div class="a" style="left:1031px;top:190px;width:13px;height:186px;background:#c0c0c0"></div>
<svg style="left:1034px;top:393px" width="8" height="5"><path d="M0 0H7.5L3.75 4Z" fill="#555"/></svg>
<div class="a" style="left:784px;top:404px;width:245px;height:16px;background:#efefef"></div>
<div class="a" style="left:1029px;top:404px;width:17px;height:16px;background:#dcdcdc"></div>
<svg style="left:790px;top:409px" width="5" height="8"><path d="M4.5 0V7.5L0.5 3.75Z" fill="#a0a0a0"/></svg>
<div class="a" style="left:801px;top:406px;width:172px;height:13px;background:#c0c0c0"></div>
<svg style="left:1019px;top:408.5px" width="5" height="8"><path d="M0 0V7.5L4.3 3.75Z" fill="#555"/></svg>
<div class="a" style="left:784px;top:419px;width:262px;height:1px;background:#4d4535"></div>
<div class="a" style="left:784px;top:420px;width:262px;height:23px;background:#023f72"></div>
<svg style="left:792px;top:431px" width="8" height="5"><path d="M0 0H8L4 4.5Z" fill="#8796a8"/></svg>
<div class="t" style="left:808.5px;top:425.57px;font-size:12.2px;color:#fff;font-weight:700;">Commit Differences</div>
<svg style="left:1026px;top:427px" width="4" height="12"><rect x="0.5" y="0" width="2.2" height="2.2" fill="#fff"/><rect x="0.5" y="4.3" width="2.2" height="2.2" fill="#fff"/><rect x="0.5" y="8.6" width="2.2" height="2.2" fill="#fff"/></svg>
<svg style="left:792px;top:452px" width="8" height="5"><path d="M0 0H8L4 4.5Z" fill="#666"/></svg>
<div class="t" style="left:808.5px;top:447.95px;font-size:11.7px;color:#3a3a3a;font-weight:400;">Differences between e14d420 and 83</div>
<svg style="left:812px;top:472.5px" width="5" height="9"><path d="M0 0V8L4 4Z" fill="#777"/></svg>
<svg style="left:829px;top:471px" width="14" height="12"><path d="M0.6 1.6Q0.6 0.6 1.6 0.6H5L6.5 2.2H11.8Q12.6 2.2 12.6 3V9.6Q12.6 10.4 11.8 10.4H1.4Q0.6 10.4 0.6 9.6Z" fill="#fff1b8" stroke="#8c6d1f" stroke-width="1"/></svg>
<div class="t" style="left:847.5px;top:470.08px;font-size:11.3px;color:#3a3a3a;font-weight:400;">resources</div>
<svg style="left:810.5px;top:496px" width="8" height="5"><path d="M0 0H8L4 4.5Z" fill="#666"/></svg>
<svg style="left:829px;top:493px" width="14" height="12"><path d="M0.6 1.6Q0.6 0.6 1.6 0.6H5L6.5 2.2H11.8Q12.6 2.2 12.6 3V9.6Q12.6 10.4 11.8 10.4H1.4Q0.6 10.4 0.6 9.6Z" fill="#fff1b8" stroke="#8c6d1f" stroke-width="1"/></svg>
<div class="t" style="left:847.5px;top:492.08px;font-size:11.3px;color:#3a3a3a;font-weight:400;">tests</div>
<svg style="left:847px;top:512.5px" width="14" height="16"><path d="M0.6 0.6H9.5L12.6 3.7V14.6H0.6Z" fill="#fff" stroke="#555" stroke-width="1" stroke-linejoin="round"/><path d="M3 4.5H8M3 7H10M3 9.5H10M3 12H10" stroke="#555" stroke-width="0.9"/></svg>
<div class="t" style="left:865px;top:514.08px;font-size:11.3px;color:#3a3a3a;font-weight:400;">f14_airframe_test.m</div>
<div class="a" style="left:1011px;top:515px;width:11px;height:11px;background:#8ec5f6;border:1px solid #3c7ec2"></div>
<svg style="left:829px;top:534.5px" width="14" height="16"><path d="M0.6 0.6H9.5L12.6 3.7V14.6H0.6Z" fill="#fff" stroke="#555" stroke-width="1" stroke-linejoin="round"/><path d="M3 4.5H8M3 7H10M3 9.5H10M3 12H10" stroke="#555" stroke-width="0.9"/></svg>
<div class="t" style="left:847.5px;top:536.08px;font-size:11.3px;color:#3a3a3a;font-weight:400;">AiframeGit_UXTestFile.m</div>
<svg style="left:829px;top:556.5px" width="14" height="16"><path d="M0.6 0.6H9.5L12.6 3.7V14.6H0.6Z" fill="#fff" stroke="#555" stroke-width="1" stroke-linejoin="round"/><path d="M3 4.5H8M3 7H10M3 9.5H10M3 12H10" stroke="#555" stroke-width="0.9"/></svg>
<div class="t" style="left:847.5px;top:558.08px;font-size:11.3px;color:#3a3a3a;font-weight:400;">Aiframe_forDoc.slx</div>
<svg style="left:829px;top:578.5px" width="14" height="16"><path d="M0.6 0.6H9.5L12.6 3.7V14.6H0.6Z" fill="#fff" stroke="#555" stroke-width="1" stroke-linejoin="round"/><path d="M3 4.5H8M3 7H10M3 9.5H10M3 12H10" stroke="#555" stroke-width="0.9"/></svg>
<div class="t" style="left:847.5px;top:580.08px;font-size:11.3px;color:#3a3a3a;font-weight:400;">README.md</div>
<div class="a" style="left:784px;top:692px;width:262px;height:1px;background:#c8c8c8"></div>
<div class="a" style="left:784px;top:693px;width:262px;height:22px;background:#e6e6e6"></div>
<svg style="left:1031px;top:698px" width="10" height="12"><path d="M0 0L7 6L0 12Z" fill="#9a9a9a"/><rect x="7" y="0" width="2" height="12" fill="#9a9a9a"/></svg>
<div class="a" style="left:926px;top:524px;width:114px;height:106px;background:#f3f3f3;border:1px solid #8c8c8c;box-shadow:1px 1px 2px rgba(0,0,0,0.08)"></div>
<div class="a" style="left:927px;top:525px;width:112px;height:26px;background:#fff;border:1.5px solid #2f86d4"></div>
<div class="t" style="left:936.5px;top:531.14px;font-size:12px;color:#222;font-weight:400;">Show Differences</div>
<div class="t" style="left:936.5px;top:556.54px;font-size:12px;color:#222;font-weight:400;">Show Revisions</div>
<div class="t" style="left:936.5px;top:582.54px;font-size:12px;color:#222;font-weight:400;">Save As...</div>
<div class="t" style="left:936.5px;top:608.84px;font-size:12px;color:#222;font-weight:400;">Save Parent As...</div>
<svg style="left:935px;top:536px" width="12" height="18"><path d="M0.5 0.5V14.5L3.8 11.3L6.3 17L8.6 16L6.1 10.4H10.5Z" fill="#111" stroke="#fff" stroke-width="0.8" stroke-linejoin="round"/></svg>
</body></html>
